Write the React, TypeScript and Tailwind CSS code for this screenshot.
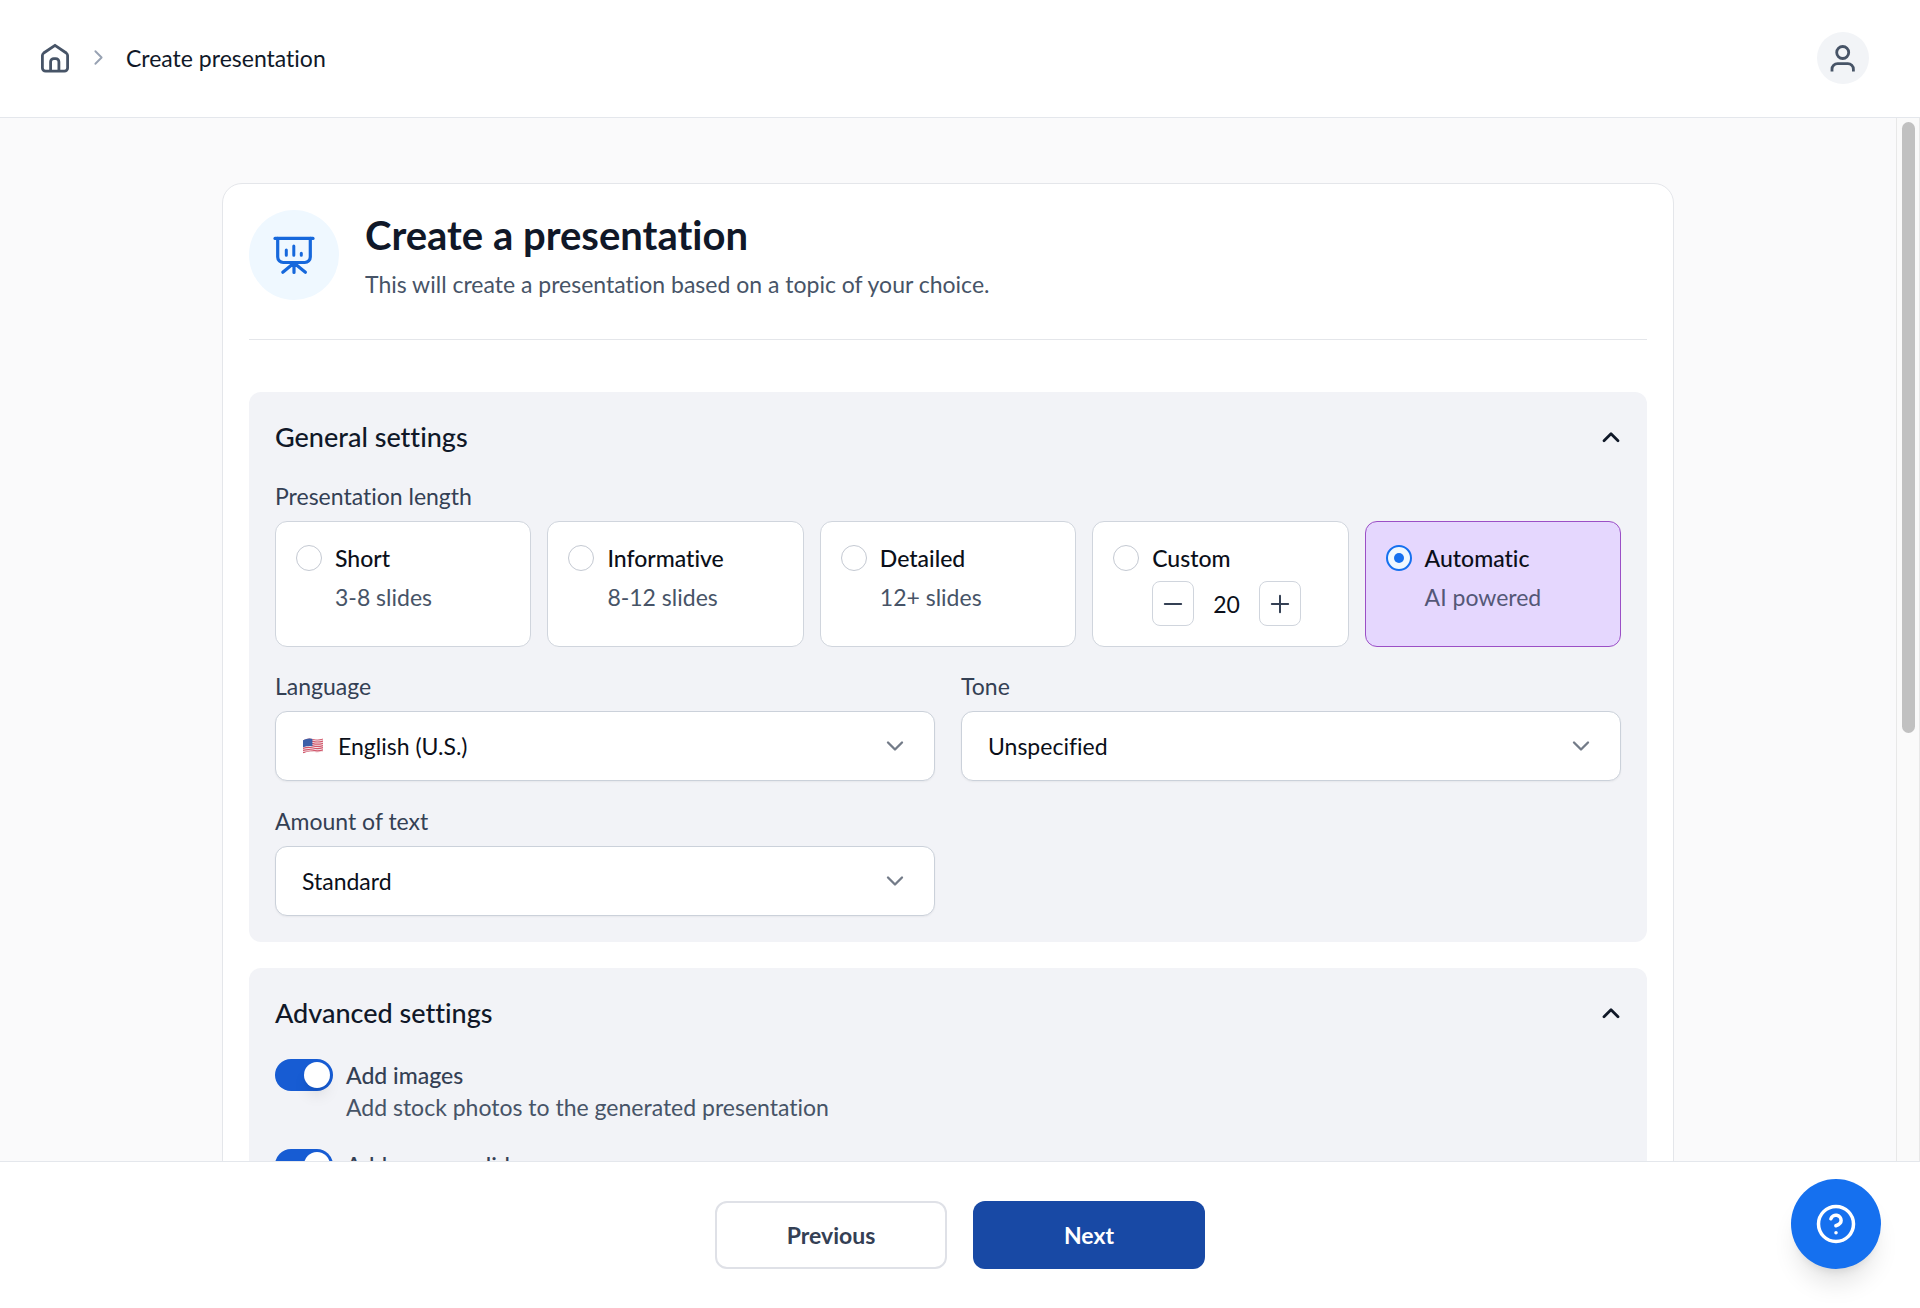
import React, { useId, useState, type ReactNode } from 'react';
import { ChevronDown, ChevronRight, CircleHelp, Minus, Plus } from 'lucide-react';

function HomeIcon() {
  return (
    <svg width="32" height="32" viewBox="0 0 32 32" fill="none" stroke="currentColor" strokeWidth="2.8" strokeLinejoin="round" aria-hidden="true">
      <path d="M16 3.3 4.7 11Q3.4 12 3.4 13.6V26a3.2 3.2 0 0 0 3.2 3.2h18.8a3.2 3.2 0 0 0 3.2-3.2V13.6q0-1.6-1.3-2.6Z" />
      <path d="M11.6 29v-9.2a3.2 3.2 0 0 1 3.2-3.2h1.9a3.2 3.2 0 0 1 3.2 3.2V29" />
    </svg>
  );
}

function UserIcon() {
  return (
    <svg width="32" height="32" viewBox="0 0 32 32" fill="none" stroke="currentColor" strokeWidth="2.8" aria-hidden="true">
      <circle cx="15.7" cy="10.5" r="6" />
      <path d="M5 29.6v-2.3a5.6 5.6 0 0 1 5.6-5.6h10.2a5.6 5.6 0 0 1 5.6 5.6v2.3" />
    </svg>
  );
}

function PresentationIcon() {
  return (
    <svg width="48" height="48" viewBox="0 0 48 48" fill="none" stroke="currentColor" strokeWidth="3.2" strokeLinecap="round" strokeLinejoin="round" aria-hidden="true">
      <path d="M5 7.4h38" />
      <path d="M7.7 7.4V26a5.5 5.5 0 0 0 5.5 5.5h21.6a5.5 5.5 0 0 0 5.5-5.5V7.4" />
      <path d="M16.3 19v5.3M23.8 15v9.3M31.3 22.2v2.1" strokeWidth="3" />
      <path d="M24 32v9.5M24 32 12.8 41.2M24 32l11.4 9.2" />
    </svg>
  );
}

function CollapseIcon() {
  return (
    <svg width="20" height="20" viewBox="0 0 20 20" fill="none" stroke="currentColor" strokeWidth="2.8" strokeLinecap="round" strokeLinejoin="round" aria-hidden="true">
      <path d="m3 13.8 7-7 7 7" />
    </svg>
  );
}

function FlagUS() {
  return (
    <svg width="22" height="18" viewBox="0 0 22 18" aria-hidden="true">
      <defs>
        <clipPath id="flag-us">
          <path d="M1 3.2Q6 .6 11 2T21 1.6V14.2Q16 15.8 11 14.8T1 16.6Z" />
        </clipPath>
      </defs>
      <g clipPath="url(#flag-us)">
        <rect width="22" height="18" fill="#f3e6e9" />
        {[1.8, 4, 6.2, 8.4, 10.6, 12.8, 15].map((y) => (
          <path key={y} d={`M0 ${y + 1}q6-2 11-.6t11-.6`} fill="none" stroke="#d2566a" strokeWidth="1.2" />
        ))}
        <path d="M0 0H10.4V9.2Q5 8.4 0 10.6Z" fill="#3c5fa8" />
      </g>
    </svg>
  );
}

function Panel({ title, children }: { title: string; children: ReactNode }) {
  const [open, setOpen] = useState(true);
  const bodyId = useId();
  return (
    <section className="rounded-xl bg-[#f2f3f7] p-[26px]">
      <h2 className="text-[27px] leading-[38px] font-medium text-[#101828]">
        <button
          type="button"
          aria-expanded={open}
          aria-controls={bodyId}
          onClick={() => setOpen(!open)}
          className="flex w-full items-center justify-between text-left"
        >
          {title}
          <span className={open ? '' : 'rotate-180'}>
            <CollapseIcon />
          </span>
        </button>
      </h2>
      <div id={bodyId} hidden={!open}>
        {children}
      </div>
    </section>
  );
}

function LengthOption({
  value,
  label,
  selected,
  onSelect,
  children,
}: {
  value: string;
  label: string;
  selected: string;
  onSelect: (value: string) => void;
  children: ReactNode;
}) {
  const id = useId();
  const active = selected === value;
  return (
    <div
      className={`flex items-start gap-[13px] rounded-xl border p-5 ${
        active ? 'border-[#9b4fc6] bg-[#e5d7fe]' : 'border-[#d0d5dd] bg-white'
      }`}
    >
      <span className="flex h-8 items-center">
        <input
          id={id}
          type="radio"
          name="presentation-length"
          value={value}
          checked={active}
          onChange={() => onSelect(value)}
          className="grid size-[26px] shrink-0 appearance-none place-content-center rounded-full border border-[#c4c9d2] bg-white checked:border-2 checked:border-[#1570ef] checked:bg-[#eff8ff] checked:before:size-[10px] checked:before:rounded-full checked:before:bg-[#1570ef] checked:before:content-['']"
        />
      </span>
      <div className="flex min-w-0 flex-col gap-[7px]">
        <label htmlFor={id} className="font-medium text-[#0b0f19]">
          {label}
        </label>
        {children}
      </div>
    </div>
  );
}

function SelectField({ label, options, flag }: { label: string; options: string[]; flag?: ReactNode }) {
  const id = useId();
  return (
    <div className="flex flex-col gap-[9px]">
      <label htmlFor={id} className="text-[#344054]">
        {label}
      </label>
      <div className="relative">
        <select
          id={id}
          className={`h-[70px] w-full appearance-none rounded-xl border border-[#cbd1da] bg-white pr-16 text-[#0b0f19] shadow-xs ${
            flag ? 'pl-[62px]' : 'pl-[26px]'
          }`}
        >
          {options.map((o) => (
            <option key={o}>{o}</option>
          ))}
        </select>
        {flag && <span className="pointer-events-none absolute inset-y-0 left-[27px] flex items-center">{flag}</span>}
        <span className="pointer-events-none absolute inset-y-0 right-[26px] flex items-center text-[#737b88]">
          <ChevronDown size={28} strokeWidth={2} />
        </span>
      </div>
    </div>
  );
}

function Toggle({ label, description }: { label: string; description: string }) {
  const id = useId();
  return (
    <div className="flex items-start gap-[13px]">
      <input
        id={id}
        type="checkbox"
        role="switch"
        defaultChecked
        className="flex h-8 w-[58px] shrink-0 appearance-none items-center rounded-full bg-[#d0d5dd] px-[3px] before:size-[26px] before:rounded-full before:bg-white before:shadow-lg before:content-[''] checked:justify-end checked:bg-[#175cd3]"
      />
      <div>
        <label htmlFor={id} className="block font-medium text-[#344054]">
          {label}
        </label>
        <p className="text-[#475467]">{description}</p>
      </div>
    </div>
  );
}

const STEP_BUTTON =
  'grid h-[45px] w-[42px] place-content-center rounded-lg border border-[#d0d5dd] bg-white text-[#344054]';

export default function App() {
  const [length, setLength] = useState('automatic');
  const [slides, setSlides] = useState(20);

  return (
    <div className="flex h-screen flex-col bg-white font-['Lato',sans-serif] text-[23px] leading-8 [font-variant-ligatures:none]">
      <header className="flex h-[118px] shrink-0 items-center justify-between border-b border-[#e4e7ec] pr-[51px] pb-[2px] pl-[39px]">
        <nav aria-label="Breadcrumb">
          <ol className="flex items-center gap-[15px]">
            <li>
              <a href="#home" aria-label="Home" className="block text-[#475467]">
                <HomeIcon />
              </a>
            </li>
            <li aria-hidden="true" className="text-[#98a2b3]">
              <ChevronRight size={25} strokeWidth={1.8} />
            </li>
            <li>
              <a href="#create" aria-current="page" className="text-[#101828]">
                Create presentation
              </a>
            </li>
          </ol>
        </nav>
        <button type="button" aria-label="Account" className="grid size-[52px] place-content-center rounded-full bg-[#f2f4f7] text-[#475467]">
          <UserIcon />
        </button>
      </header>

      <div className="flex min-h-0 flex-1 bg-[#fafafb]">
        <main className="min-w-0 flex-1 overflow-hidden px-8 pt-[65px]">
          <div className="mx-auto max-w-[1452px] rounded-[20px] border border-[#e4e6ea] bg-white p-[26px]">
            <div className="flex items-center gap-[26px] border-b border-[#e4e6ea] pb-[39px]">
              <div className="grid size-[90px] shrink-0 place-content-center rounded-full bg-[#eff8ff] text-[#1668dc]">
                <PresentationIcon />
              </div>
              <div className="flex flex-col gap-2">
                <h1 className="text-[40px] leading-[50px] font-bold text-[#101828]">Create a presentation</h1>
                <p className="text-[#475467]">This will create a presentation based on a topic of your choice.</p>
              </div>
            </div>

            <div className="flex flex-col gap-[26px] pt-13">
              <Panel title="General settings">
                <fieldset className="pt-6">
                  <legend className="contents">
                    <span className="mb-[9px] block text-[#344054]">Presentation length</span>
                  </legend>
                  <div className="grid grid-cols-5 gap-4">
                    <LengthOption value="short" label="Short" selected={length} onSelect={setLength}>
                      <p className="text-[#475467]">3-8 slides</p>
                    </LengthOption>
                    <LengthOption value="informative" label="Informative" selected={length} onSelect={setLength}>
                      <p className="text-[#475467]">8-12 slides</p>
                    </LengthOption>
                    <LengthOption value="detailed" label="Detailed" selected={length} onSelect={setLength}>
                      <p className="text-[#475467]">12+ slides</p>
                    </LengthOption>
                    <LengthOption value="custom" label="Custom" selected={length} onSelect={setLength}>
                      <div className="flex items-center gap-[19px]">
                        <button type="button" aria-label="Fewer slides" onClick={() => setSlides(Math.max(1, slides - 1))} className={STEP_BUTTON}>
                          <Minus size={28} strokeWidth={1.7} />
                        </button>
                        <output className="text-[#0b0f19]">{slides}</output>
                        <button type="button" aria-label="More slides" onClick={() => setSlides(slides + 1)} className={STEP_BUTTON}>
                          <Plus size={28} strokeWidth={1.7} />
                        </button>
                      </div>
                    </LengthOption>
                    <LengthOption value="automatic" label="Automatic" selected={length} onSelect={setLength}>
                      <p className="text-[#545777]">AI powered</p>
                    </LengthOption>
                  </div>
                </fieldset>
                <div className="mt-[23px] grid grid-cols-2 gap-x-[26px] gap-y-6">
                  <SelectField label="Language" options={['English (U.S.)', 'Deutsch', 'Español']} flag={<FlagUS />} />
                  <SelectField label="Tone" options={['Unspecified', 'Formal', 'Casual']} />
                  <SelectField label="Amount of text" options={['Standard', 'Concise', 'Detailed']} />
                </div>
              </Panel>

              <Panel title="Advanced settings">
                <div className="flex flex-col gap-[26px] pt-[27px]">
                  <Toggle label="Add images" description="Add stock photos to the generated presentation" />
                  <Toggle label="Add sources slide" description="Add a slide that lists the sources" />
                </div>
              </Panel>
            </div>
          </div>
        </main>
        <div aria-hidden="true" className="flex w-6 shrink-0 justify-center border-x border-[#e8e8e8] bg-[#fafafa] py-1">
          <div className="h-[59%] w-[13px] rounded-full bg-[#c1c1c1]" />
        </div>
      </div>

      <footer className="relative flex shrink-0 justify-center gap-[26px] border-t border-[#e4e7ec] bg-white py-[39px]">
        <button type="button" className="h-[68px] w-[232px] rounded-xl border-2 border-[#dfe1e7] bg-white font-bold text-[#344054]">
          Previous
        </button>
        <button type="button" className="h-[68px] w-[232px] rounded-xl bg-[#1849a5] font-bold text-white">
          Next
        </button>
        <button
          type="button"
          aria-label="Help"
          className="absolute right-[39px] bottom-[39px] grid size-[90px] place-content-center rounded-full bg-[#1570ef] text-white shadow-xl"
        >
          <CircleHelp size={42} strokeWidth={2} />
        </button>
      </footer>
    </div>
  );
}
